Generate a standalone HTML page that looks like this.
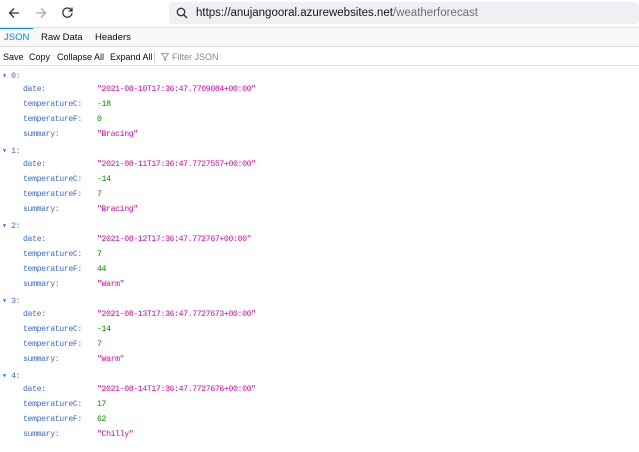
<!DOCTYPE html><html><head><style>
body{margin:0;width:639px;height:452px;background:#fff;font-family:"Liberation Sans",sans-serif;overflow:hidden;position:relative}
.nav{position:absolute;top:0;left:0;width:639px;height:27px;background:#fff;border-bottom:1px solid #e0e0e6}
.url{position:absolute;left:169px;top:2px;width:470px;height:22px;background:#f0f0f4;border-radius:4px}
.url span{position:absolute;left:27px;top:5px;font-size:11.5px;color:#15141a}
.tabs{position:absolute;top:28px;left:0;width:639px;height:18px;background:#f9f9fa;border-bottom:1px solid #e0e0e2;font-size:9.5px}
.tabs span{position:absolute;top:4px;color:#0c0c0d}
.tb{position:absolute;top:47px;left:0;width:639px;height:18px;border-bottom:1px solid #e0e0e2;font-size:9px}
.tb span{position:absolute;top:5px;color:#0c0c0d}
.j{position:absolute;font-family:"Liberation Mono",monospace;font-size:8.2px;letter-spacing:-0.38px;white-space:pre}
.k{color:#3b6bd6}.s{color:#dd00a9}.n{color:#058b00}.i{color:#3b6bd6}
</style></head><body>
<div class="nav">
<svg style="position:absolute;left:8px;top:7px" width="12" height="12" viewBox="0 0 12 12"><path d="M11 6H1.5M6 1.5L1.5 6 6 10.5" fill="none" stroke="#333" stroke-width="1.3"/></svg>
<svg style="position:absolute;left:35px;top:7px" width="12" height="12" viewBox="0 0 12 12"><path d="M1 6h9.5M6 1.5L10.5 6 6 10.5" fill="none" stroke="#aaa" stroke-width="1.3"/></svg>
<svg style="position:absolute;left:61px;top:6px" width="13" height="13" viewBox="0 0 13 13"><path d="M10.5 4.5A4.6 4.6 0 1 0 11 7" fill="none" stroke="#333" stroke-width="1.3"/><path d="M11 1.5V5H7.5" fill="none" stroke="#333" stroke-width="1.3"/></svg>
<div class="url"><svg style="position:absolute;left:7px;top:5px" width="12" height="12" viewBox="0 0 12 12"><circle cx="5" cy="5" r="3.7" fill="none" stroke="#333" stroke-width="1.3"/><path d="M7.7 7.7L11 11" stroke="#333" stroke-width="1.4"/></svg><span>https://anujangooral.azurewebsites.net<span style="position:static;color:#6d6d75">/weatherforecast</span></span></div>
</div>
<div class="tabs"><div style="position:absolute;left:0;top:0;width:33px;height:1px;background:#0a84ff"></div><span style="left:4px;color:#0a84ff">JSON</span><span style="left:41px">Raw Data</span><span style="left:95px">Headers</span></div>
<div class="tb"><span style="left:3px">Save</span><span style="left:29px">Copy</span><span style="left:57px">Collapse All</span><span style="left:110px">Expand All</span><div style="position:absolute;left:154px;top:4px;width:1px;height:11px;background:#ccc"></div><svg style="position:absolute;left:161px;top:6px" width="8" height="8" viewBox="0 0 8 8"><path d="M0.5 0.5h7L4.8 4v3.5L3.2 6.5V4z" fill="none" stroke="#888" stroke-width="0.8"/></svg><span style="left:172px;color:#888">Filter JSON</span></div>
<div id="j"></div>
<script>
var d=[["2021-08-10T17:36:47.7709084+00:00","-18","0","Bracing"],["2021-08-11T17:36:47.7727557+00:00","-14","7","Bracing"],["2021-08-12T17:36:47.772767+00:00","7","44","Warm"],["2021-08-13T17:36:47.7727673+00:00","-14","7","Warm"],["2021-08-14T17:36:47.7727676+00:00","17","62","Chilly"]];
var h="";d.forEach(function(r,i){var y=70+i*75;
h+='<div class="j i" style="left:2px;top:'+y+'px">▾ '+i+':</div>';
var ks=["date:","temperatureC:","temperatureF:","summary:"],vs=['<span class="s">"'+r[0]+'"</span>','<span class="n">'+r[1]+'</span>','<span class="n">'+r[2]+'</span>','<span class="s">"'+r[3]+'"</span>'];
for(var k=0;k<4;k++){var yy=y+15*(k+1);h+='<div class="j k" style="left:23px;top:'+yy+'px">'+ks[k]+'</div><div class="j" style="left:97px;top:'+yy+'px">'+vs[k]+'</div>';}
});document.getElementById("j").innerHTML=h;
</script>
</body></html>
